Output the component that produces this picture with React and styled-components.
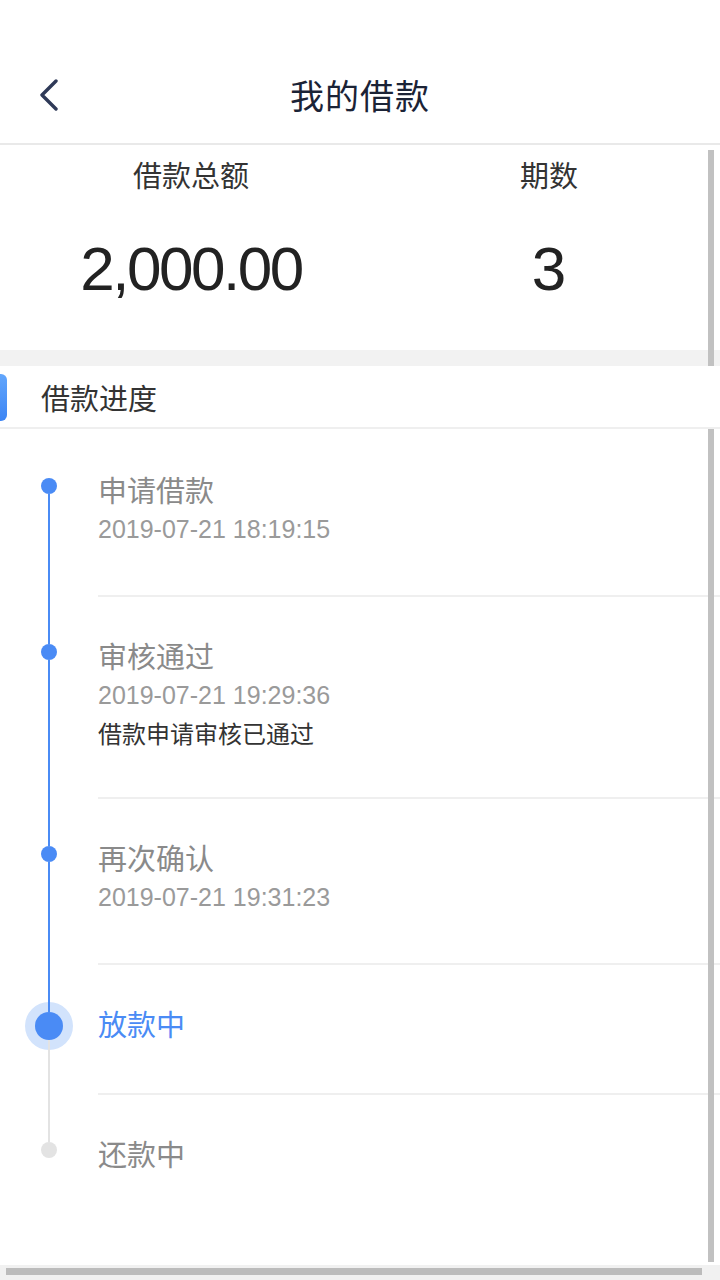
import React from "react";
import styled, { createGlobalStyle } from "styled-components";

const Global = createGlobalStyle`
  html, body { margin: 0; padding: 0; background: #ffffff; }
  body { font-family: "Noto Sans CJK SC", "Liberation Sans", sans-serif; }
  * { box-sizing: border-box; }
`;

const BLUE = "#4a8bf5";
const GREY_LINE = "#e3e3e3";

const Page = styled.div`
  width: 720px;
  height: 1280px;
  display: flex;
  flex-direction: column;
  background: #fff;
  overflow: hidden;
`;

const Header = styled.header`
  padding-top: 47px;
  height: 145px;
  border-bottom: 2px solid #e9e9e9;
  flex: none;
`;

const Bar = styled.div`
  position: relative;
  height: 96px;
  display: flex;
  align-items: center;
  justify-content: center;
`;

const BackButton = styled.button`
  position: absolute;
  left: 32px;
  top: 28px;
  width: 34px;
  height: 40px;
  border: 0;
  padding: 0;
  background: transparent;
  display: flex;
  align-items: center;
  justify-content: center;
`;

const Title = styled.h1`
  margin: 0;
  font-size: 34px;
  line-height: 48px;
  font-weight: 400;
  color: #1b2336;
  letter-spacing: 1px;
`;

const SummaryWrap = styled.div`
  position: relative;
  flex: none;
  background: #f2f2f2;
  padding-bottom: 16px;
`;

const Summary = styled.section`
  display: grid;
  grid-template-columns: 382px 334px;
  background: #fff;
  padding: 9px 0 46px;
`;

const Stat = styled.div`
  display: flex;
  flex-direction: column;
  align-items: center;
`;

const StatLabel = styled.div`
  font-size: 29px;
  line-height: 40px;
  color: #333;
`;

const StatValue = styled.div`
  margin-top: 40px;
  font-family: "Liberation Sans", Arial, sans-serif;
  font-size: 62px;
  line-height: 70px;
  letter-spacing: ${(p) => (p.$tight ? "-2.5px" : "0")};
  color: #222;
`;

const VThumb = styled.div`
  position: absolute;
  right: 6px;
  top: ${(p) => p.$top}px;
  bottom: ${(p) => p.$bottom}px;
  width: 6px;
  background: #c1c1c1;
`;

const SectionHead = styled.div`
  position: relative;
  flex: none;
  height: 63px;
  display: flex;
  align-items: center;
  padding-left: 41px;
  border-bottom: 2px solid #efefef;
`;

const Accent = styled.span`
  position: absolute;
  left: 0;
  top: 8px;
  width: 7px;
  height: 47px;
  border-radius: 0 6px 6px 0;
  background: linear-gradient(180deg, #62a6fc 0%, #3d85f4 100%);
`;

const SectionTitle = styled.h2`
  margin: 0;
  font-size: 29px;
  font-weight: 400;
  line-height: 40px;
  color: #333;
`;

const Timeline = styled.div`
  position: relative;
  flex: 1;
  display: flex;
  flex-direction: column;
`;

const Item = styled.div`
  display: flex;
  flex: ${(p) => (p.$last ? "1" : "none")};
`;

const Rail = styled.div`
  width: 98px;
  flex: none;
  display: flex;
  flex-direction: column;
  align-items: center;
`;

const Segment = styled.div`
  position: relative;
  z-index: 1;
  width: 2px;
  flex: ${(p) => (p.$grow ? "1" : "none")};
  height: ${(p) => (p.$grow ? "auto" : "49px")};
  background: ${(p) => p.$color};
`;

const Dot = styled.div`
  flex: none;
  width: ${(p) => (p.$active ? 28 : 16)}px;
  height: ${(p) => (p.$active ? 28 : 16)}px;
  border-radius: 50%;
  background: ${(p) => p.$color};
  box-shadow: ${(p) => (p.$active ? "0 0 0 10px #d2e3fc" : "none")};
`;

const Body = styled.div`
  flex: 1;
  min-height: 130px;
  padding: 38px 0 46px;
  border-top: 2px solid ${(p) => (p.$first ? "transparent" : "#efefef")};
`;

const StepTitle = styled.div`
  font-size: 29px;
  line-height: 40px;
  color: ${(p) => (p.$active ? BLUE : "#8a8a8a")};
`;

const StepTime = styled.div`
  font-family: "Liberation Sans", Arial, sans-serif;
  font-size: 25px;
  line-height: 40px;
  color: #9a9a9a;
`;

const StepNote = styled.div`
  font-size: 24px;
  line-height: 36px;
  color: #333;
`;

const HScroll = styled.div`
  flex: none;
  height: 15px;
  background: #f1f1f1;
  padding: 3px 18px 5px 6px;
`;

const HThumb = styled.div`
  height: 7px;
  background: #bcbcbc;
`;

const steps = [
  { title: "申请借款", time: "2019-07-21 18:19:15", state: "done" },
  { title: "审核通过", time: "2019-07-21 19:29:36", note: "借款申请审核已通过", state: "done" },
  { title: "再次确认", time: "2019-07-21 19:31:23", state: "done" },
  { title: "放款中", state: "active" },
  { title: "还款中", state: "todo" },
];

function Step({ step, index, count }) {
  const first = index === 0;
  const last = index === count - 1;
  const active = step.state === "active";
  const topColor = first ? "transparent" : step.state === "todo" ? GREY_LINE : BLUE;
  const bottomColor = last ? "transparent" : step.state === "done" ? BLUE : GREY_LINE;
  const dotColor = step.state === "todo" ? GREY_LINE : BLUE;
  return (
    <Item $last={last}>
      <Rail>
        <Segment $color={topColor} />
        <Dot $active={active} $color={dotColor} />
        <Segment $grow $color={bottomColor} />
      </Rail>
      <Body $first={first}>
        <StepTitle $active={active}>{step.title}</StepTitle>
        {step.time && <StepTime>{step.time}</StepTime>}
        {step.note && <StepNote>{step.note}</StepNote>}
      </Body>
    </Item>
  );
}

export default function App() {
  return (
    <>
      <Global />
      <Page>
        <Header>
          <Bar>
            <BackButton aria-label="back">
              <svg width="20" height="32" viewBox="0 0 20 32">
                <polyline
                  points="17,2 3,16 17,30"
                  fill="none"
                  stroke="#2f3a58"
                  strokeWidth="3.4"
                  strokeLinecap="round"
                  strokeLinejoin="round"
                />
              </svg>
            </BackButton>
            <Title>我的借款</Title>
          </Bar>
        </Header>

        <SummaryWrap>
          <Summary>
            <Stat>
              <StatLabel>借款总额</StatLabel>
              <StatValue $tight>2,000.00</StatValue>
            </Stat>
            <Stat>
              <StatLabel>期数</StatLabel>
              <StatValue>3</StatValue>
            </Stat>
          </Summary>
          <VThumb $top={5} $bottom={0} />
        </SummaryWrap>

        <SectionHead>
          <Accent />
          <SectionTitle>借款进度</SectionTitle>
        </SectionHead>

        <Timeline>
          {steps.map((s, i) => (
            <Step key={s.title} step={s} index={i} count={steps.length} />
          ))}
          <VThumb $top={0} $bottom={3} />
        </Timeline>

        <HScroll>
          <HThumb />
        </HScroll>
      </Page>
    </>
  );
}
